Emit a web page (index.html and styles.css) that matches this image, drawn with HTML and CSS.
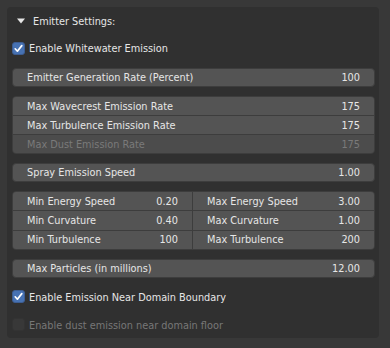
FILE: index.html
```html
<!DOCTYPE html>
<html>
<head>
<meta charset="utf-8">
<link rel="stylesheet" href="styles.css">
</head>
<body>
<div class="area">
  <div class="panel">
    <div class="header">
      <svg class="tri" width="8" height="6" viewBox="0 0 8 6"><path d="M0 0.5H8L4 5.5Z" fill="#e6e6e6"/></svg>
      <span>Emitter Settings:</span>
    </div>
    <div class="check first">
      <span class="box on"><svg width="13" height="13" viewBox="0 0 13 13"><path d="M3.2 6.8L5.4 9.2L9.8 3.6" fill="none" stroke="#fff" stroke-width="1.7" stroke-linecap="round" stroke-linejoin="round"/></svg></span>
      <span class="lbl">Enable Whitewater Emission</span>
    </div>
    <div class="field gap9"><span>Emitter Generation Rate (Percent)</span><span>100</span></div>
    <div class="group gap9">
      <div class="row"><span>Max Wavecrest Emission Rate</span><span>175</span></div>
      <div class="row"><span>Max Turbulence Emission Rate</span><span>175</span></div>
      <div class="row dis"><span>Max Dust Emission Rate</span><span>175</span></div>
    </div>
    <div class="field gap9"><span>Spray Emission Speed</span><span>1.00</span></div>
    <div class="grid gap9">
      <div class="row"><span>Min Energy Speed</span><span>0.20</span></div>
      <div class="row"><span>Max Energy Speed</span><span>3.00</span></div>
      <div class="row"><span>Min Curvature</span><span>0.40</span></div>
      <div class="row"><span>Max Curvature</span><span>1.00</span></div>
      <div class="row"><span>Min Turbulence</span><span>100</span></div>
      <div class="row"><span>Max Turbulence</span><span>200</span></div>
    </div>
    <div class="field gap9"><span>Max Particles (in millions)</span><span>12.00</span></div>
    <div class="check">
      <span class="box on"><svg width="13" height="13" viewBox="0 0 13 13"><path d="M3.2 6.8L5.4 9.2L9.8 3.6" fill="none" stroke="#fff" stroke-width="1.7" stroke-linecap="round" stroke-linejoin="round"/></svg></span>
      <span class="lbl">Enable Emission Near Domain Boundary</span>
    </div>
    <div class="check dis">
      <span class="box"></span>
      <span class="lbl">Enable dust emission near domain floor</span>
    </div>
  </div>
</div>
</body>
</html>
```
FILE: styles.css
```css
html, body {
  margin: 0;
  padding: 0;
}
body {
  width: 390px;
  height: 348px;
  overflow: hidden;
  background: #383838;
  font-family: "DejaVu Sans", sans-serif;
  font-size: 9.75px;
  color: #e6e6e6;
}
.area {
  padding: 7px 11px 0 7px;
}
.panel {
  width: 372px;
  height: 331px;
  box-sizing: border-box;
  background: #303030;
  border-radius: 4px;
  padding: 0 4px 0 5px;
}
.header {
  height: 28px;
  display: flex;
  align-items: center;
  padding-left: 5px;
}
.tri {
  margin-right: 8px;
}
.check {
  height: 20px;
  display: flex;
  align-items: center;
  margin-top: 3px;
}
.check.first {
  margin-top: 3px;
  margin-bottom: 10px;
}
.check + .check {
  margin-top: 8px;
}
.box {
  width: 13px;
  height: 13px;
  box-sizing: border-box;
  border-radius: 3px;
  background: #545454;
  border: 1px solid #3d3d3d;
  margin-right: 4px;
  display: flex;
}
.box.on {
  background: #4772b3;
  border-color: #3d5d91;
}
.box svg {
  margin: -1px;
}
.check.dis .box {
  background: #383838;
  border-color: #333;
}
.check.dis .lbl {
  color: #777;
}
.field {
  height: 19px;
  box-sizing: border-box;
  background: #545454;
  border: 1px solid #3d3d3d;
  border-radius: 4px;
  display: flex;
  align-items: center;
  justify-content: space-between;
  padding: 0 14px 0 14px;
}
.gap9 { margin-bottom: 9px; }
.group {
  border: 1px solid #3d3d3d;
  border-radius: 4px;
  overflow: hidden;
  background: #3d3d3d;
  display: flex;
  flex-direction: column;
  gap: 1px;
}
.group .row, .grid .row {
  height: 18px;
  background: #545454;
  display: flex;
  align-items: center;
  justify-content: space-between;
  padding: 0 14px;
}
.row.dis {
  background: #4c4c4c;
  color: #7a7a7a;
}
.grid {
  border: 1px solid #3d3d3d;
  border-radius: 4px;
  overflow: hidden;
  background: #3d3d3d;
  display: grid;
  grid-template-columns: 179px 1fr;
  gap: 1px;
}
.grid .row {
  height: 18.33px;
}
.check .lbl {
  padding-top: 1px;
}
```
